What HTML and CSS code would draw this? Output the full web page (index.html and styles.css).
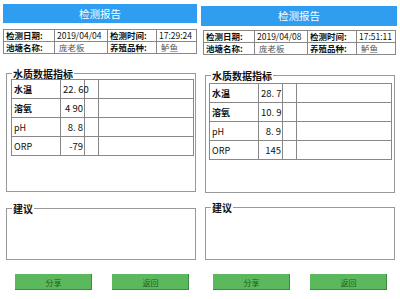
FILE: index.html
```html
<!DOCTYPE html>
<html lang="zh-CN">
<head>
  <meta charset="UTF-8">
  <meta name="viewport" content="width=device-width, initial-scale=1.0">
  <title>检测报告</title>
  <link rel="stylesheet" href="styles.css">
</head>
<body>
  <div class="page">
    <div class="panel">
      <div class="title">检测报告</div>
      <table class="info">
        <tr>
          <td class="label">检测日期:</td>
          <td>2019/04/04</td>
          <td class="label">检测时间:</td>
          <td>17:29:24</td>
        </tr>
        <tr>
          <td class="label">池塘名称:</td>
          <td class="soft">庞老板</td>
          <td class="label">养殖品种:</td>
          <td class="soft">鲈鱼</td>
        </tr>
      </table>
      <fieldset class="box water">
        <legend>水质数据指标</legend>
        <table class="data">
          <tr><td class="name">水温</td><td class="num">22. 60</td><td></td><td></td></tr>
          <tr><td class="name">溶氧</td><td class="num">4 90</td><td></td><td></td></tr>
          <tr><td class="name latin">pH</td><td class="num">8. 8</td><td></td><td></td></tr>
          <tr><td class="name latin">ORP</td><td class="num">-79</td><td></td><td></td></tr>
        </table>
      </fieldset>
      <fieldset class="box advice">
        <legend>建议</legend>
      </fieldset>
      <div class="actions">
        <button class="btn">分享</button>
        <button class="btn">返回</button>
      </div>
    </div>

    <div class="panel panel-b">
      <div class="title">检测报告</div>
      <table class="info">
        <tr>
          <td class="label">检测日期:</td>
          <td>2019/04/08</td>
          <td class="label">检测时间:</td>
          <td>17:51:11</td>
        </tr>
        <tr>
          <td class="label">池塘名称:</td>
          <td class="soft">庞老板</td>
          <td class="label">养殖品种:</td>
          <td class="soft">鲈鱼</td>
        </tr>
      </table>
      <fieldset class="box water">
        <legend>水质数据指标</legend>
        <table class="data">
          <tr><td class="name">水温</td><td class="num">28. 7</td><td></td><td></td></tr>
          <tr><td class="name">溶氧</td><td class="num">10. 9</td><td></td><td></td></tr>
          <tr><td class="name latin">pH</td><td class="num">8. 9</td><td></td><td></td></tr>
          <tr><td class="name latin">ORP</td><td class="num">145</td><td></td><td></td></tr>
        </table>
      </fieldset>
      <fieldset class="box advice">
        <legend>建议</legend>
      </fieldset>
      <div class="actions">
        <button class="btn">分享</button>
        <button class="btn">返回</button>
      </div>
    </div>
  </div>
</body>
</html>
```

FILE: styles.css
```css
body {
  margin: 0;
  padding: 0;
  background-color: #fff;
  color: #111;
  font-family: "Noto Sans CJK SC", "Noto Sans", sans-serif;
}

.page {
  display: flex;
  width: 400px;
  height: 299px;
}

.panel {
  width: 200px;
  display: flex;
  flex-direction: column;
}

.title {
  margin: 4px 3px 0 3px;
  height: 19px;
  background-color: #2f9df0;
  color: #fff;
  font-size: 10.5px;
  line-height: 19px;
  text-align: center;
}

.info {
  margin: 6px 0 0 3px;
  width: 194px;
  border-collapse: collapse;
  table-layout: fixed;
  font-size: 8.5px;
}

.info td {
  border: 1px solid #888;
  height: 11px;
  padding: 0 2px;
  line-height: 11px;
  white-space: nowrap;
  overflow: hidden;
}

.info td:nth-child(1) { width: 46px; }
.info td:nth-child(2) { width: 48px; }
.info td:nth-child(3) { width: 44px; }

.info .label {
  font-weight: bold;
}

.info .soft {
  color: #555;
  padding-left: 4px;
}

.box {
  box-sizing: border-box;
  margin: 0 4px 0 6px;
  padding: 0;
  border: 1px solid #999;
  min-width: 0;
}

.box legend {
  margin-left: 5px;
  padding: 0 1px;
  font-size: 10px;
  font-weight: bold;
  line-height: 13px;
}

.water {
  margin-top: 13px;
  height: 125px;
}

.advice {
  margin-top: 10px;
  height: 58px;
}

.data {
  margin: -1px 0 0 4px;
  width: 183px;
  border-collapse: collapse;
  table-layout: fixed;
  font-size: 9px;
}

.data td {
  border: 1px solid #888;
  height: 18px;
  padding: 0 2px;
  white-space: nowrap;
}

.data td:nth-child(1) { width: 44px; }
.data td:nth-child(2) { width: 20px; }
.data td:nth-child(3) { width: 9px; }

.data .name {
  font-weight: bold;
}

.data .latin {
  font-weight: normal;
}

.data .num {
  text-align: right;
  padding-right: 1px;
  font-size: 9.5px;
}

.actions {
  display: flex;
  gap: 20px;
  margin-top: 14px;
  padding-left: 15px;
}

.btn {
  width: 77px;
  height: 16px;
  padding: 0;
  border: none;
  background-color: #5cb85c;
  box-shadow: inset -1px -1px 0 #3d8a3d;
  color: #1f5f1f;
  font-family: "Noto Sans CJK SC", sans-serif;
  font-size: 8px;
  cursor: pointer;
}

.panel-b .title {
  margin-top: 6px;
  margin-left: 1px;
  height: 20px;
  line-height: 20px;
}

.panel-b .info {
  margin-top: 4px;
  margin-left: 3px;
  width: 193px;
}

.panel-b .box {
  margin-left: 5px;
  margin-right: 5px;
}

.panel-b .water {
  margin-top: 14px;
  height: 124px;
}

.panel-b .data {
  margin-top: 1px;
  margin-left: 3px;
}

.panel-b .advice {
  margin-top: 8px;
  height: 59px;
}

.panel-b .actions {
  padding-left: 13px;
}
```
